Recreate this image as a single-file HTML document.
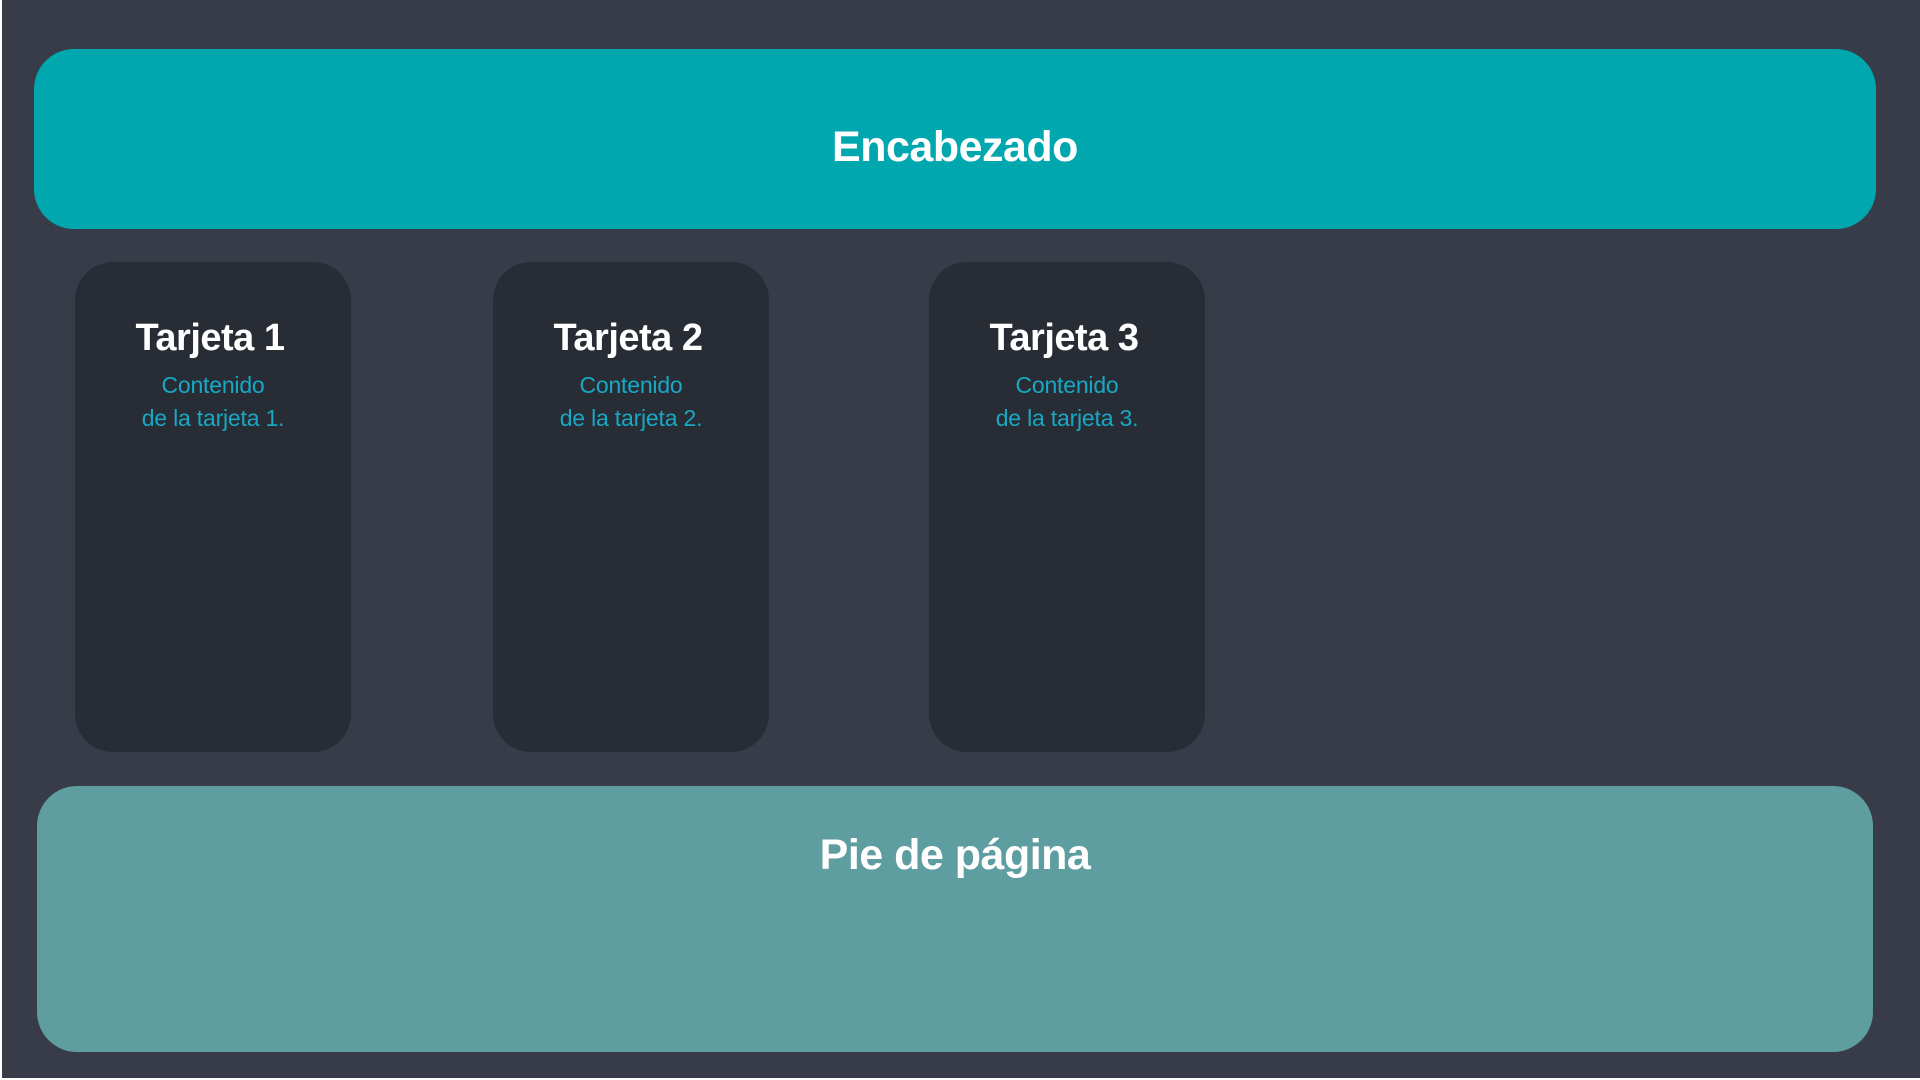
<!DOCTYPE html>
<html><head><meta charset="utf-8"><style>
html,body{margin:0;padding:0;width:1920px;height:1080px;background:#fff;overflow:hidden;font-family:"Liberation Sans",sans-serif}
.bg{position:absolute;left:2px;top:0;width:1918px;height:1078px;background:#383c48}
.hdr{position:absolute;left:34px;top:49px;width:1842px;height:180px;background:#00a7af;border-radius:40px;color:#fff;font-weight:bold;font-size:43px;text-align:center;line-height:196px;letter-spacing:-0.5px}
.card{position:absolute;top:262px;width:276px;height:490px;background:#282c35;border-radius:38px;text-align:center}
.t{position:absolute;top:54px;left:0;right:0;color:#fff;font-weight:bold;font-size:38px;letter-spacing:-0.5px;line-height:44px}
.c{position:absolute;top:107px;left:0;right:0;color:#17a9c4;font-size:23px;line-height:33px;letter-spacing:-0.2px}
.ftr{position:absolute;left:37px;top:786px;width:1836px;height:266px;background:#5f9ea0;border-radius:40px;color:#fff;font-weight:bold;font-size:43px;text-align:center;padding-top:45px;box-sizing:border-box;letter-spacing:-0.5px}
</style></head><body>
<div class="bg"></div>
<div class="hdr">Encabezado</div>
<div class="card" style="left:75px"><div class="t" style="margin-left:-6px">Tarjeta 1</div><div class="c">Contenido<br>de la tarjeta 1.</div></div>
<div class="card" style="left:493px"><div class="t" style="margin-left:-6px">Tarjeta 2</div><div class="c">Contenido<br>de la tarjeta 2.</div></div>
<div class="card" style="left:929px"><div class="t" style="margin-left:-6px">Tarjeta 3</div><div class="c">Contenido<br>de la tarjeta 3.</div></div>
<div class="ftr">Pie de página</div>
</body></html>
